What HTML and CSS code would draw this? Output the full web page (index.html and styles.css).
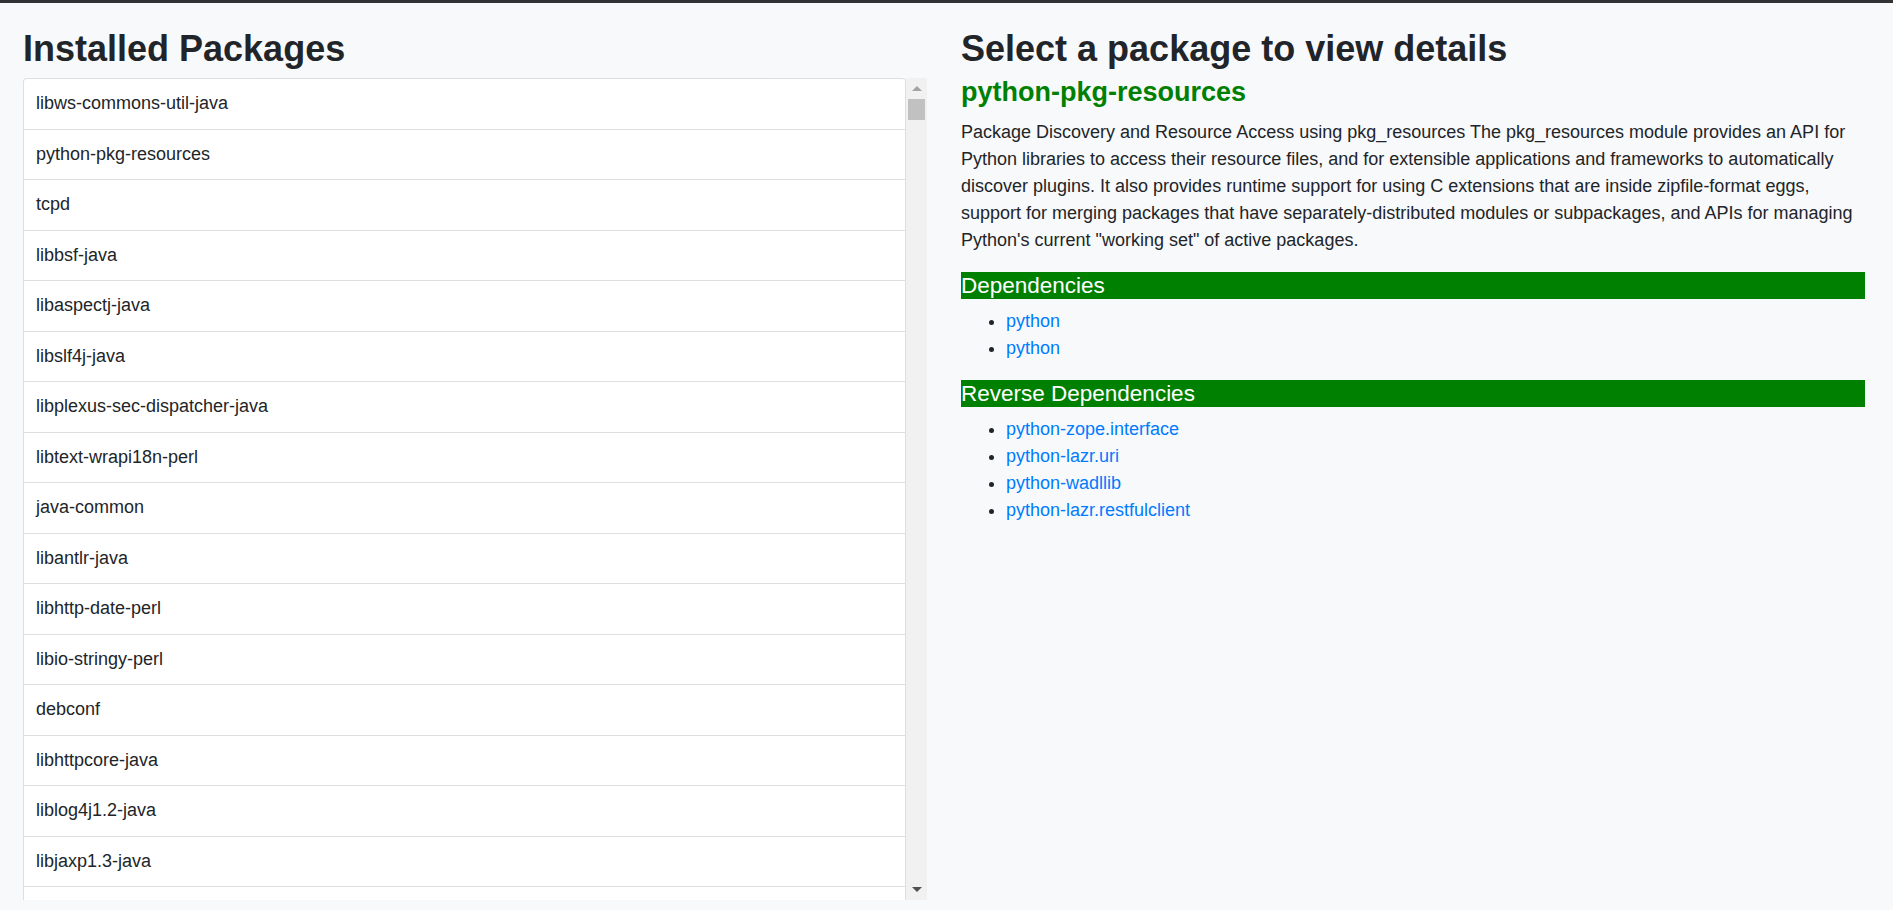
FILE: index.html
```html
<!DOCTYPE html>
<html lang="en">
<head>
<meta charset="utf-8">
<title>Installed Packages</title>
<link rel="stylesheet" href="styles.css">
</head>
<body>
<div class="page">
  <section class="col col-left">
    <h1 class="title title-left">Installed Packages</h1>
    <div class="scroll-box">
      <ul class="pkg-list">
        <li class="pkg-item">libws-commons-util-java</li>
        <li class="pkg-item">python-pkg-resources</li>
        <li class="pkg-item">tcpd</li>
        <li class="pkg-item">libbsf-java</li>
        <li class="pkg-item">libaspectj-java</li>
        <li class="pkg-item">libslf4j-java</li>
        <li class="pkg-item">libplexus-sec-dispatcher-java</li>
        <li class="pkg-item">libtext-wrapi18n-perl</li>
        <li class="pkg-item">java-common</li>
        <li class="pkg-item">libantlr-java</li>
        <li class="pkg-item">libhttp-date-perl</li>
        <li class="pkg-item">libio-stringy-perl</li>
        <li class="pkg-item">debconf</li>
        <li class="pkg-item">libhttpcore-java</li>
        <li class="pkg-item">liblog4j1.2-java</li>
        <li class="pkg-item">libjaxp1.3-java</li>
      </ul>
      <div class="scrollbar">
        <div class="sb-btn"><span class="arrow-up"></span></div>
        <div class="sb-thumb"></div>
        <div class="sb-track"></div>
        <div class="sb-btn"><span class="arrow-down"></span></div>
      </div>
    </div>
  </section>
  <section class="col col-right">
    <h1 class="title title-right">Select a package to view details</h1>
    <h2 class="pkg-name">python-pkg-resources</h2>
    <p class="desc">Package Discovery and Resource Access using pkg_resources The pkg_resources module provides an API for Python libraries to access their resource files, and for extensible applications and frameworks to automatically discover plugins. It also provides runtime support for using C extensions that are inside zipfile-format eggs, support for merging packages that have separately-distributed modules or subpackages, and APIs for managing Python's current "working set" of active packages.</p>
    <h3 class="section-bar">Dependencies</h3>
    <ul class="dep-list">
      <li><a href="#">python</a></li>
      <li><a href="#">python</a></li>
    </ul>
    <h3 class="section-bar">Reverse Dependencies</h3>
    <ul class="dep-list">
      <li><a href="#">python-zope.interface</a></li>
      <li><a href="#">python-lazr.uri</a></li>
      <li><a href="#">python-wadllib</a></li>
      <li><a href="#">python-lazr.restfulclient</a></li>
    </ul>
  </section>
</div>
</body>
</html>
```
FILE: styles.css
```css
* { box-sizing: border-box; }
html { font-size: 18px; }
body {
  margin: 0;
  height: 910px;
  overflow: hidden;
  background: #f8f9fa;
  border-top: 3px solid #333;
  font-family: "Liberation Sans", Arial, sans-serif;
  font-size: 18px;
  line-height: 1.5;
  color: #212529;
}
.page {
  display: grid;
  grid-template-columns: 1fr 1fr;
  column-gap: 34px;
  padding: 23.5px 28px 0 23px;
}
.col { min-width: 0; }
.title {
  margin: 0;
  font-size: 36px;
  font-weight: 700;
  line-height: 1.2;
}
.title-left { margin-bottom: 8.5px; }
.title-right { margin-bottom: 6.5px; }

.scroll-box {
  display: flex;
  height: 822px;
  overflow: hidden;
}
.pkg-list {
  flex: 1;
  margin: 0;
  padding: 0;
  list-style: none;
  background: #fff;
  border: 1px solid rgba(0,0,0,.125);
  border-bottom: none;
  border-radius: 4px 4px 0 0;
}
.pkg-item {
  padding: 11.25px 12px 12.25px;
  line-height: 26px;
  border-bottom: 1px solid rgba(0,0,0,.125);
}
.scrollbar {
  width: 21px;
  flex: none;
  display: flex;
  flex-direction: column;
  background: #f1f1f1;
}
.sb-btn {
  height: 21px;
  flex: none;
  display: flex;
  align-items: center;
  justify-content: center;
}
.arrow-up {
  width: 0; height: 0;
  border-left: 5px solid transparent;
  border-right: 5px solid transparent;
  border-bottom: 5px solid #a3a3a3;
}
.arrow-down {
  width: 0; height: 0;
  border-left: 5px solid transparent;
  border-right: 5px solid transparent;
  border-top: 5px solid #505050;
}
.sb-thumb {
  height: 21px;
  margin: 0 2px;
  background: #c1c1c1;
  flex: none;
}
.sb-track { flex: 1; }

.pkg-name {
  margin: 0 0 10px;
  font-size: 27px;
  font-weight: 700;
  line-height: 1.2;
  color: #008000;
}
.desc { margin: 0 0 18px; }
.section-bar {
  margin: 0 0 9px;
  font-size: 22.5px;
  font-weight: 400;
  line-height: 1.2;
  color: #fff;
  background: #008000;
}
.dep-list {
  margin: 0 0 18px;
  padding-left: 45px;
}
.dep-list a {
  color: #007bff;
  text-decoration: none;
}
```
